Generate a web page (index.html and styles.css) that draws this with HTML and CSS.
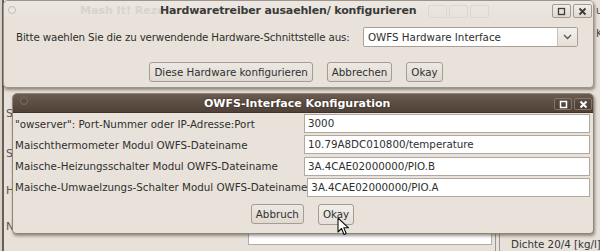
FILE: index.html
```html
<!DOCTYPE html>
<html lang="de">
<head>
    <meta charset="UTF-8">
    <title>OWFS-Interface Konfiguration</title>
    <link rel="stylesheet" href="styles.css">
</head>
<body>
    <div class="desktop">
        <!-- Hauptfenster im Hintergrund -->
        <div class="app-window">
            <div class="app-labels">
                <span class="lbl-s1">S</span>
                <span class="lbl-s2">S</span>
                <span class="lbl-h">H</span>
                <span class="lbl-n">N</span>
            </div>
            <div class="app-right">
                <span class="app-right-top">u-</span>
                <span class="app-right-mid">Ko</span>
            </div>
            <div class="app-bottom">
                <div class="app-input"></div>
                <div class="app-sep"></div>
                <div class="app-status">Dichte 20/4 [kg/l]</div>
            </div>
        </div>

        <!-- Dialog: Hardwaretreiber -->
        <div class="win win-hw">
            <div class="titlebar titlebar-inactive">
                <span class="tb-dot"></span>
                <span class="ghost-title">Mash It! Reze</span>
                <span class="ghost-btns"><i></i><i></i><i></i></span>
                <span class="tb-title">Hardwaretreiber ausaehlen/ konfigurieren</span>
                <span class="tb-btns">
                    <span class="tb-btn"><svg width="9" height="9" viewBox="0 0 9 9"><rect x="1.5" y="1.5" width="6" height="6" fill="none" stroke="#3c3c3c" stroke-width="1.3"/></svg></span>
                    <span class="tb-btn"><svg width="9" height="9" viewBox="0 0 9 9"><path d="M1.5 1.5 L7.5 7.5 M7.5 1.5 L1.5 7.5" stroke="#3c3c3c" stroke-width="1.8"/></svg></span>
                </span>
            </div>
            <div class="hw-body">
                <div class="hw-row">
                    <span class="hw-label">Bitte waehlen Sie die zu verwendende Hardware-Schnittstelle aus:</span>
                    <div class="combo">
                        <span class="combo-text">OWFS Hardware Interface</span>
                        <span class="combo-arrow"><svg width="9" height="6" viewBox="0 0 9 6"><path d="M1 1 L4.5 4.5 L8 1" fill="none" stroke="#555" stroke-width="1.3"/></svg></span>
                    </div>
                </div>
                <div class="btn-row btn-row-hw">
                    <button class="btn">Diese Hardware konfigurieren</button>
                    <button class="btn">Abbrechen</button>
                    <button class="btn">Okay</button>
                </div>
            </div>
        </div>

        <!-- Dialog: OWFS-Interface -->
        <div class="win win-owfs">
            <div class="titlebar titlebar-active">
                <span class="tb-dot tb-dot-dark"></span>
                <span class="tb-title">OWFS-Interface Konfiguration</span>
                <span class="tb-btns">
                    <span class="tb-btn tb-btn-dark"><svg width="9" height="9" viewBox="0 0 9 9"><rect x="1.5" y="1.5" width="6" height="6" fill="none" stroke="#fff" stroke-width="1.5"/></svg></span>
                    <span class="tb-btn tb-btn-dark"><svg width="9" height="9" viewBox="0 0 9 9"><path d="M1.5 1.5 L7.5 7.5 M7.5 1.5 L1.5 7.5" stroke="#fff" stroke-width="2"/></svg></span>
                </span>
            </div>
            <div class="owfs-body">
                <div class="form-row">
                    <span class="form-label">"owserver": Port-Nummer oder IP-Adresse:Port</span>
                    <div class="field">3000</div>
                </div>
                <div class="form-row">
                    <span class="form-label">Maischthermometer Modul OWFS-Dateiname</span>
                    <div class="field">10.79A8DC010800/temperature</div>
                </div>
                <div class="form-row">
                    <span class="form-label">Maische-Heizungsschalter Modul OWFS-Dateiname</span>
                    <div class="field">3A.4CAE02000000/PIO.B</div>
                </div>
                <div class="form-row">
                    <span class="form-label">Maische-Umwaelzungs-Schalter Modul OWFS-Dateiname</span>
                    <div class="field">3A.4CAE02000000/PIO.A</div>
                </div>
                <div class="btn-row btn-row-owfs">
                    <button class="btn">Abbruch</button>
                    <button class="btn btn-hover">Okay</button>
                </div>
            </div>
            <!-- Mauszeiger -->
            <svg class="cursor" width="13" height="19" viewBox="0 0 13 19"><path d="M1 1 L1 15 L4.5 11.5 L7 17.5 L9.2 16.5 L6.8 10.8 L11.5 10.8 Z" fill="#fff" stroke="#111" stroke-width="1.1" stroke-linejoin="round"/></svg>
        </div>
    </div>
</body>
</html>
```

FILE: styles.css
```css
body {
    margin: 0;
    padding: 0;
    font-family: "DejaVu Sans", sans-serif;
    font-size: 10.3px;
    color: #2f2f2f;
    background-color: #e6e0d8;
}
.desktop {
    position: relative;
    width: 600px;
    height: 251px;
    overflow: hidden;
}

/* Hintergrundfenster */
.app-window {
    position: absolute;
    left: 0;
    top: 0;
    width: 600px;
    height: 251px;
    background-color: #e7e1d9;
    border-left: 2px solid #d8d1c8;
    box-sizing: border-box;
}
.app-window::before {
    content: "";
    position: absolute;
    left: 0;
    top: 0;
    bottom: 0;
    width: 2px;
    background: #6a5f57;
}
.app-labels span {
    position: absolute;
    left: 4px;
    color: #555;
    font-size: 11px;
}
.lbl-s1 { top: 107px; }
.lbl-s2 { top: 147px; }
.lbl-h { top: 184px; }
.lbl-n { top: 220px; }
.app-right span {
    position: absolute;
    left: 594px;
    color: #444;
}
.app-right-top { top: 4px; }
.app-right-mid { top: 27px; }
.app-bottom {
    position: absolute;
    left: 246px;
    top: 231px;
    display: flex;
    align-items: flex-start;
}
.app-input {
    width: 242px;
    height: 12px;
    background: #fff;
    border: 1px solid #b3aca3;
}
.app-sep {
    width: 3px;
    height: 20px;
    margin-left: 3px;
    border-left: 1px solid #9e968c;
    border-right: 1px solid #9e968c;
}
.app-status {
    margin-left: 11px;
    margin-top: 7px;
    color: #333;
    white-space: nowrap;
}

/* Fenster allgemein */
.win {
    position: absolute;
    background-color: #e8e2da;
    border: 1px solid #8e857b;
    border-radius: 5px 5px 4px 4px;
    box-shadow: 1px 2px 3px rgba(40, 30, 20, 0.45);
    box-sizing: border-box;
}
.win-hw {
    left: 3px;
    top: 0;
    width: 591px;
    height: 88px;
    border-color: #9d958b;
}
.win-owfs {
    left: 12px;
    top: 93px;
    width: 582px;
    height: 141px;
}
.titlebar {
    position: relative;
    height: 18px;
    display: flex;
    align-items: center;
    border-radius: 4px 4px 0 0;
}
.titlebar-inactive {
    height: 19px;
    padding-left: 156px;
    background: linear-gradient(#ece7e1, #e8e2da);
}
.titlebar-active {
    padding-left: 191px;
    background: linear-gradient(#6b5b4f, #4f4138);
    border-bottom: 1px solid #3e322a;
}
.tb-title {
    font-weight: bold;
    font-size: 11px;
    color: #3a3a3a;
    position: relative;
    white-space: nowrap;
}
.titlebar-inactive .tb-title {
    letter-spacing: -0.15px;
}
.titlebar-active .tb-title {
    color: #fff;
    text-shadow: 0 0 2px #2a1f18;
}
.tb-dot {
    position: absolute;
    left: 4px;
    top: 5px;
    width: 8px;
    height: 8px;
    border-radius: 50%;
    border: 1px solid #c4bdb4;
    background: #ece7e0;
    box-sizing: border-box;
}
.tb-dot-dark {
    left: 7px;
    top: 3px;
    border-color: #7d6d61;
    background: #5c4d42;
}
.ghost-title {
    position: absolute;
    left: 76px;
    top: 3px;
    font-weight: bold;
    font-size: 11px;
    color: #d9d3cb;
}
.ghost-btns {
    position: absolute;
    left: 424px;
    top: 4px;
    display: flex;
    gap: 2px;
}
.ghost-btns i {
    width: 17px;
    height: 11px;
    border: 1px solid #ddd7cf;
    border-radius: 2px;
}
.tb-btns {
    position: absolute;
    right: 1px;
    top: 3px;
    display: flex;
    gap: 2px;
}
.tb-btn {
    width: 17px;
    height: 12px;
    display: flex;
    align-items: center;
    justify-content: center;
    border: 1px solid #a39b91;
    border-radius: 2px;
    background: linear-gradient(#f1ede8, #e0d9d0);
}
.tb-btn-dark {
    width: 16px;
    height: 10px;
    margin-top: 1px;
    border-color: #85766a;
    background: linear-gradient(#5e4f44, #4a3d34);
}

/* Hardware-Dialog */
.hw-body {
    padding: 7px 15px 0 12px;
}
.hw-row {
    display: flex;
    align-items: center;
    justify-content: space-between;
}
.hw-label {
    letter-spacing: -0.15px;
}
.combo {
    width: 213px;
    height: 18px;
    display: flex;
    background: #fff;
    border: 1px solid #a8a096;
    border-radius: 2px;
}
.combo-text {
    flex: 1;
    padding-left: 4px;
    line-height: 18px;
}
.combo-arrow {
    width: 19px;
    display: flex;
    align-items: center;
    justify-content: center;
    border-left: 1px solid #c9c2b9;
    background: linear-gradient(#f3f0ec, #e4ded6);
}
.btn-row {
    display: flex;
    justify-content: center;
}
.btn-row-hw {
    margin-top: 15px;
    gap: 14px;
    padding-right: 2px;
}
.btn {
    font-family: "DejaVu Sans", sans-serif;
    font-size: 10.3px;
    color: #2f2f2f;
    height: 20px;
    padding: 0 4px;
    background: linear-gradient(#ece8e3, #e0d9d1);
    border: 1px solid #a59c92;
    border-radius: 3px;
}
.btn-hover {
    height: 21px;
    background: linear-gradient(#f1eee9, #e6e0d9);
}

/* OWFS-Dialog */
.owfs-body {
    padding: 1px 3px 0 2px;
}
.form-row {
    display: flex;
    align-items: center;
    justify-content: space-between;
    height: 19px;
    margin-bottom: 2.3px;
}
.form-label {
    white-space: nowrap;
}
.field {
    width: 281px;
    height: 17px;
    line-height: 17px;
    padding-left: 3px;
    background: #fff;
    border: 1px solid #b0a89e;
    box-sizing: content-box;
}
.btn-row-owfs {
    margin-top: 7px;
    gap: 14px;
}
.cursor {
    position: absolute;
    left: 324px;
    top: 123px;
}
```
